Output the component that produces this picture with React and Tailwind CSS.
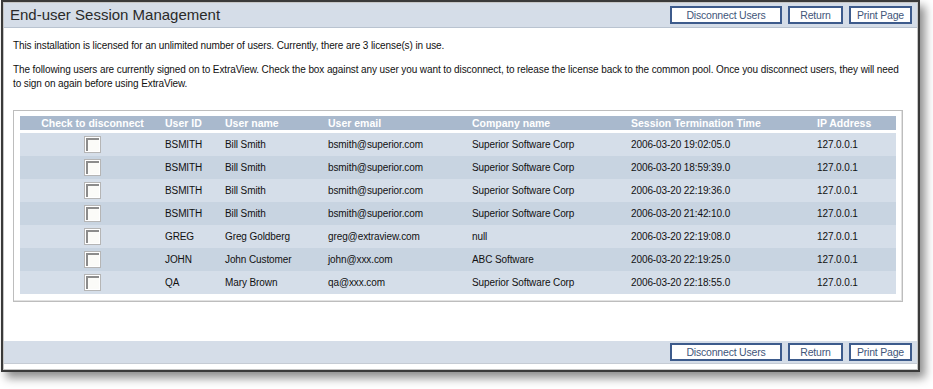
import React from 'react';

const rows = [
  ['BSMITH', 'Bill Smith', 'bsmith@superior.com', 'Superior Software Corp', '2006-03-20 19:02:05.0', '127.0.0.1'],
  ['BSMITH', 'Bill Smith', 'bsmith@superior.com', 'Superior Software Corp', '2006-03-20 18:59:39.0', '127.0.0.1'],
  ['BSMITH', 'Bill Smith', 'bsmith@superior.com', 'Superior Software Corp', '2006-03-20 22:19:36.0', '127.0.0.1'],
  ['BSMITH', 'Bill Smith', 'bsmith@superior.com', 'Superior Software Corp', '2006-03-20 21:42:10.0', '127.0.0.1'],
  ['GREG', 'Greg Goldberg', 'greg@extraview.com', 'null', '2006-03-20 22:19:08.0', '127.0.0.1'],
  ['JOHN', 'John Customer', 'john@xxx.com', 'ABC Software', '2006-03-20 22:19:25.0', '127.0.0.1'],
  ['QA', 'Mary Brown', 'qa@xxx.com', 'Superior Software Corp', '2006-03-20 22:18:55.0', '127.0.0.1'],
];

const cols = 'grid grid-cols-[145px_60px_103px_144px_159px_186px_1fr] items-center';

const Btn = ({ children, w }) => (
  <button className={`${w} h-[18px] bg-white border-2 border-[#3d5b8c] text-[10.5px] tracking-[-0.2px] leading-none text-[#42567a]`}>
    {children}
  </button>
);

const Buttons = () => (
  <div className="flex gap-[6px]">
    <Btn w="w-[112px]">Disconnect Users</Btn>
    <Btn w="w-[55px]">Return</Btn>
    <Btn w="w-[63px]">Print Page</Btn>
  </div>
);

const Checkbox = () => (
  <div className="w-[17px] h-[17px] bg-white border border-[#b5b5b5] flex items-center justify-center">
    <div className="w-[13px] h-[13px] border-t-2 border-l-2 border-[#8c8c8c] bg-[#fbfbf8]" />
  </div>
);

export default function App() {
  return (
    <div className="w-[933px] h-[389px] bg-white overflow-hidden font-['Liberation_Sans',Arial,sans-serif]">
      <div className="ml-[1px] w-[919px] h-[372px] border-2 border-[#3a3a3a] shadow-[5px_6px_9px_rgba(0,0,0,0.45)] bg-white flex flex-col">
        <div className="flex-1 flex flex-col border border-[#c6c6c6]">
          <div className="h-[25px] bg-[#d5dde8] border-b border-[#b9c3d0] flex items-center justify-between pl-[6px] pr-[5px]">
            <h1 className="text-[15px] text-[#2a2a2a] pt-[1px]">End-user Session Management</h1>
            <Buttons />
          </div>

          <div className="px-[9px] pt-[11px] text-[10px] tracking-[-0.1px] leading-[14px] text-[#111]">
            <p>This installation is licensed for an unlimited number of users. Currently, there are 3 license(s) in use.</p>
            <p className="mt-[10px]">
              The following users are currently signed on to ExtraView. Check the box against any user you want to disconnect, to release the license back to the common pool. Once you disconnect users, they will need to sign on again before using ExtraView.
            </p>

            <div className="mt-[19px] w-[890px] border border-[#bdbdbd] shadow-[inset_-1px_-1px_0_#e2e2e2] px-[6px] pt-[5px] pb-[7px]">
              <div className={`${cols} h-[14px] bg-[#a9b9cd] text-white font-bold text-[10.5px] tracking-[0px]`}>
                <div className="text-center">Check to disconnect</div>
                <div>User ID</div>
                <div>User name</div>
                <div>User email</div>
                <div>Company name</div>
                <div>Session Termination Time</div>
                <div>IP Address</div>
              </div>
              <div className="mt-[3px]">
                {rows.map((r, i) => (
                  <div key={i} className={`${cols} h-[23px] ${i % 2 === 0 ? 'bg-[#d5dee9]' : 'bg-[#c8d4e1]'}`}>
                    <div className="flex justify-center">
                      <Checkbox />
                    </div>
                    {r.map((c, j) => (
                      <div key={j}>{c}</div>
                    ))}
                  </div>
                ))}
              </div>
            </div>
          </div>

          <div className="mt-auto mb-[5px] h-[23px] bg-[#d5dde8] border-b border-[#c5cbd4] flex items-center justify-end pr-[5px]">
            <Buttons />
          </div>
        </div>
      </div>
    </div>
  );
}
